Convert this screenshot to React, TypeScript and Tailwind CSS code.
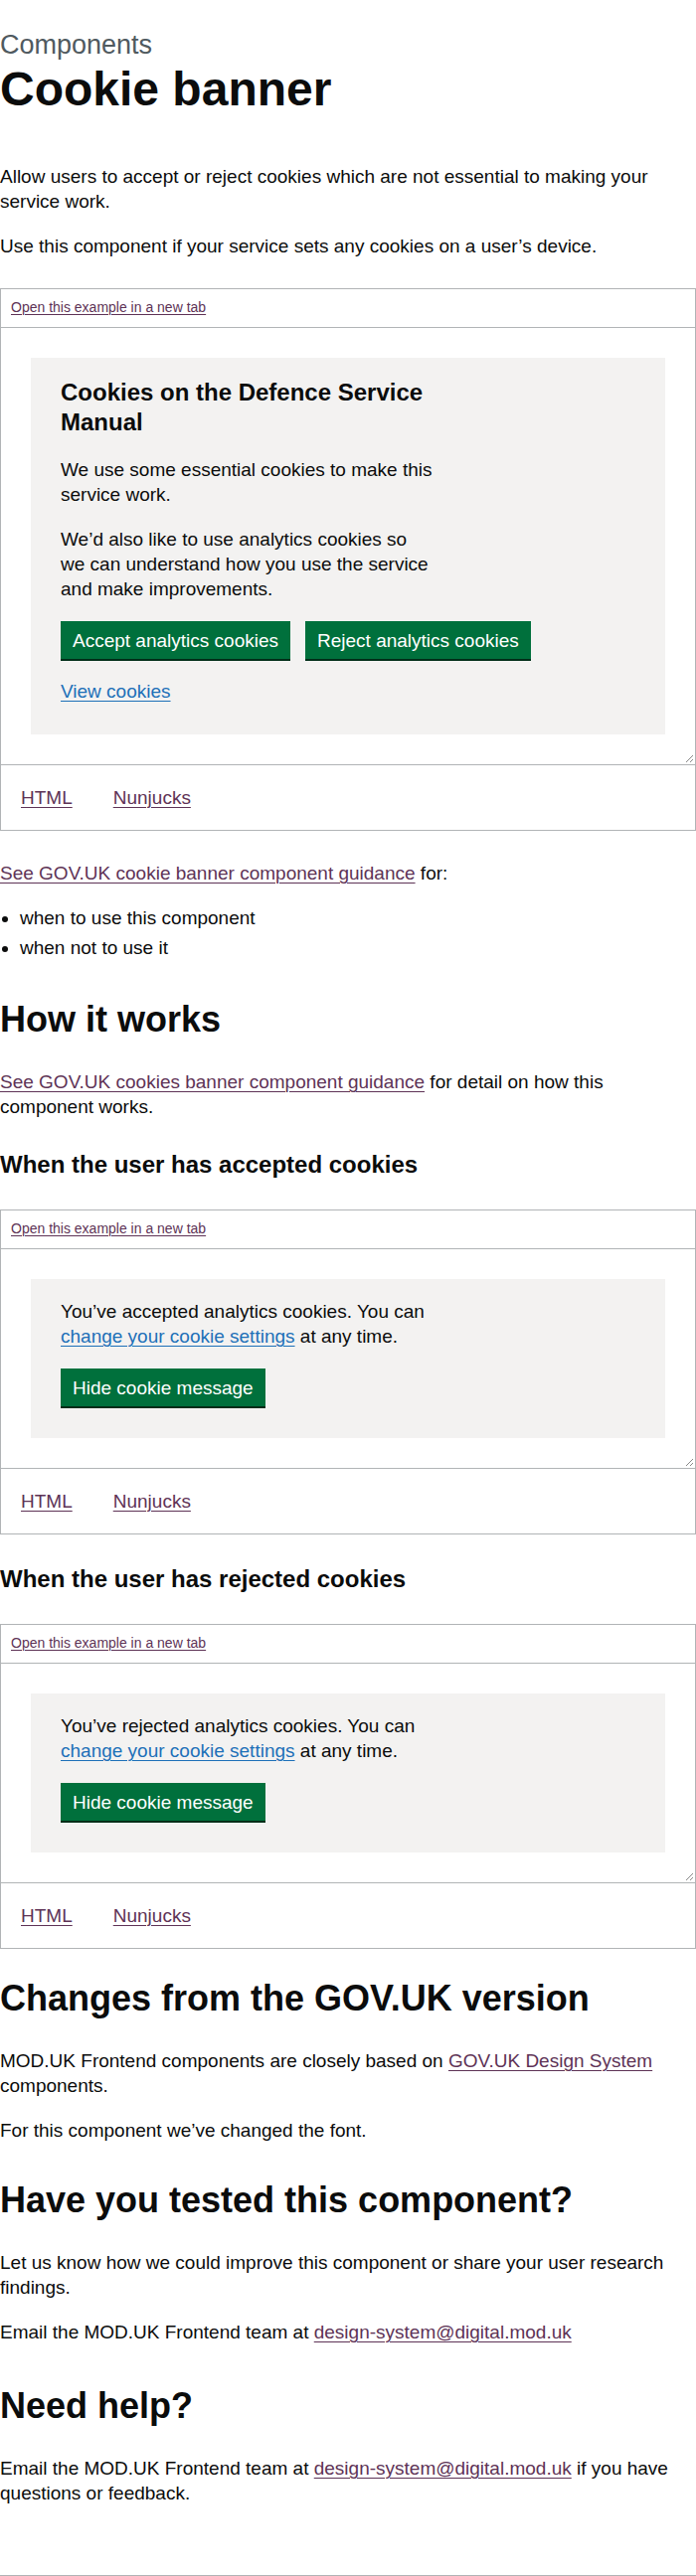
const linkCls =
  "text-[#5e3356] underline decoration-1 underline-offset-[3px]";

function Tabs() {
  return (
    <div className="flex gap-[41px] pl-[20px] pt-[20px] pb-[20px] text-[19px] leading-[25px]">
      <a href="#" className={linkCls}>
        HTML
      </a>
      <a href="#" className={linkCls}>
        Nunjucks
      </a>
    </div>
  );
}

function ResizeHandle() {
  return (
    <svg
      className="absolute right-[1px] bottom-[1px]"
      width="10"
      height="10"
      viewBox="0 0 10 10"
    >
      <path d="M9 2 L2 9 M9 6 L6 9" stroke="#8a8a8a" strokeWidth="1" />
    </svg>
  );
}

function Example({
  children,
  className,
}: {
  children: React.ReactNode;
  className?: string;
}) {
  return (
    <div className={"border border-[#b1b4b6] " + (className ?? "")}>
      <div className="h-[39px] border-b border-[#b1b4b6] pt-[8px] pl-[10px] text-[14px] leading-[20px]">
        <a href="#" className="text-[#5e3356] underline decoration-1 underline-offset-2">
          Open this example in a new tab
        </a>
      </div>
      <div className="relative border-b border-[#b1b4b6] p-[30px]">
        {children}
        <ResizeHandle />
      </div>
      <Tabs />
    </div>
  );
}

function GreenButton({ label }: { label: string }) {
  return (
    <button className="border-2 border-transparent bg-[#00703c] px-[10px] pt-[8px] pb-[7px] text-[19px] leading-[19px] text-white shadow-[0_2px_0_#002d18]">
      {label}
    </button>
  );
}

function ConfirmBanner({ action }: { action: string }) {
  return (
    <div className="bg-[#f3f2f1] px-[30px] pt-[20px] pb-[32px]">
      <p className="mb-[20px] max-w-[375px]">
        You’ve {action} analytics cookies. You can{" "}
        <a href="#" className="text-[#1d70b8] underline decoration-1 underline-offset-[3px]">
          change your cookie settings
        </a>{" "}
        at any time.
      </p>
      <GreenButton label="Hide cookie message" />
    </div>
  );
}

export default function App() {
  return (
    <div className="w-[700px] bg-white pt-[30px] font-['Liberation_Sans',Arial,sans-serif] text-[19px] leading-[25px] text-[#0b0c0c]">
      <span className="mb-[5px] block text-[27px] leading-[30px] text-[#505a5f]">
        Components
      </span>
      <h1 className="mb-[50px] text-[48px] leading-[50px] font-bold">Cookie banner</h1>
      <p className="mb-[20px]">
        Allow users to accept or reject cookies which are not essential to making your
        service work.
      </p>
      <p className="mb-[30px]">
        Use this component if your service sets any cookies on a user’s device.
      </p>

      <Example className="mb-[30px]">
        <div className="bg-[#f3f2f1] px-[30px] pt-[20px] pb-[31px]">
          <div className="max-w-[375px]">
            <h2 className="mb-[20px] text-[24px] leading-[30px] font-bold">
              Cookies on the Defence Service Manual
            </h2>
            <p className="mb-[20px]">We use some essential cookies to make this service work.</p>
            <p className="mb-[20px]">
              We’d also like to use analytics cookies so we can understand how you use the
              service and make improvements.
            </p>
          </div>
          <div className="flex gap-[15px]">
            <GreenButton label="Accept analytics cookies" />
            <GreenButton label="Reject analytics cookies" />
          </div>
          <a
            href="#"
            className="mt-[20px] inline-block text-[#1d70b8] underline decoration-1 underline-offset-[3px]"
          >
            View cookies
          </a>
        </div>
      </Example>

      <p className="mb-[20px]">
        <a href="#" className={linkCls}>
          See GOV.UK cookie banner component guidance
        </a>{" "}
        for:
      </p>
      <ul className="mb-[40px] list-disc pl-[20px]">
        <li className="mb-[5px]">when to use this component</li>
        <li>when not to use it</li>
      </ul>

      <h2 className="mb-[30px] text-[36px] leading-[40px] font-bold">How it works</h2>
      <p className="mb-[31px]">
        <a href="#" className={linkCls}>
          See GOV.UK cookies banner component guidance
        </a>{" "}
        for detail on how this component works.
      </p>

      <h3 className="mb-[30px] text-[24px] leading-[30px] font-bold">
        When the user has accepted cookies
      </h3>
      <Example className="mb-[30px]">
        <ConfirmBanner action="accepted" />
      </Example>

      <h3 className="mb-[30px] text-[24px] leading-[30px] font-bold">
        When the user has rejected cookies
      </h3>
      <Example className="mb-[30px]">
        <ConfirmBanner action="rejected" />
      </Example>

      <h2 className="mb-[30px] text-[36px] leading-[40px] font-bold">
        Changes from the GOV.UK version
      </h2>
      <p className="mb-[20px]">
        MOD.UK Frontend components are closely based on{" "}
        <a href="#" className={linkCls}>
          GOV.UK Design System
        </a>{" "}
        components.
      </p>
      <p className="mb-[38px]">For this component we’ve changed the font.</p>

      <h2 className="mb-[30px] text-[36px] leading-[40px] font-bold">
        Have you tested this component?
      </h2>
      <p className="mb-[20px]">
        Let us know how we could improve this component or share your user research
        findings.
      </p>
      <p className="mb-[42px]">
        Email the MOD.UK Frontend team at{" "}
        <a href="#" className={linkCls}>
          design-system@digital.mod.uk
        </a>
      </p>

      <h2 className="mb-[30px] text-[36px] leading-[40px] font-bold">Need help?</h2>
      <p className="mb-[70px]">
        Email the MOD.UK Frontend team at{" "}
        <a href="#" className={linkCls}>
          design-system@digital.mod.uk
        </a>{" "}
        if you have questions or feedback.
      </p>
      <div className="border-t border-[#b1b4b6]" />
    </div>
  );
}
